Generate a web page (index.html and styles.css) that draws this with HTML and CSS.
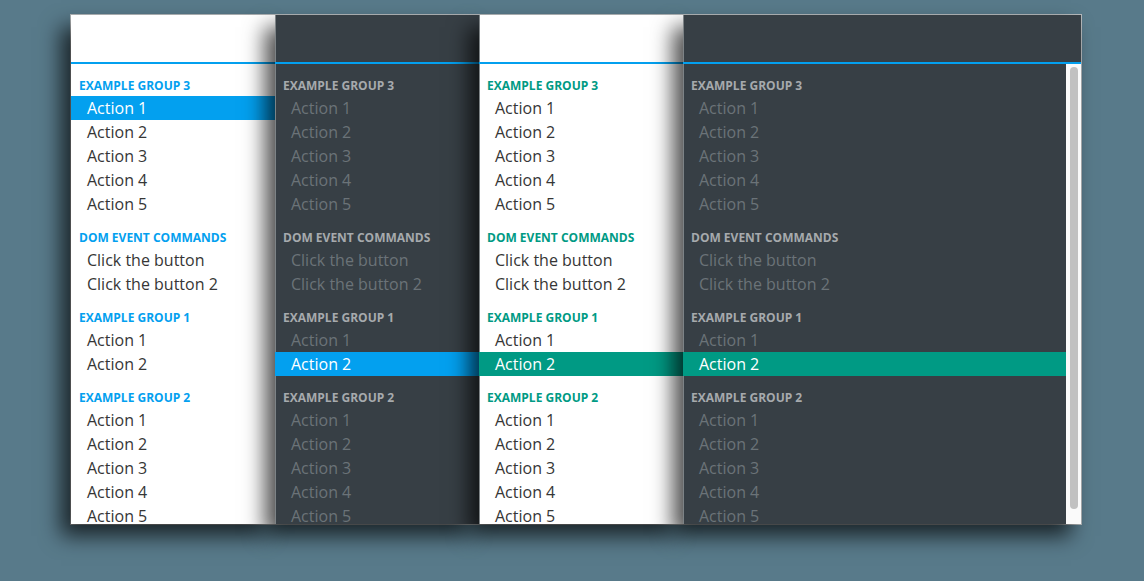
FILE: index.html
```html
<!DOCTYPE html>
<html>
<head>
<meta charset="utf-8">
<link rel="stylesheet" href="styles.css">
</head>
<body>
<div class="frame">
  <div class="panel light blue">
    <div class="head"></div>
    <div class="body">
      <ul class="list">
        <li class="group">Example Group 3</li>
        <li class="item sel">Action 1</li>
        <li class="item">Action 2</li>
        <li class="item">Action 3</li>
        <li class="item">Action 4</li>
        <li class="item">Action 5</li>
        <li class="group">DOM Event Commands</li>
        <li class="item">Click the button</li>
        <li class="item">Click the button 2</li>
        <li class="group">Example Group 1</li>
        <li class="item">Action 1</li>
        <li class="item">Action 2</li>
        <li class="group">Example Group 2</li>
        <li class="item">Action 1</li>
        <li class="item">Action 2</li>
        <li class="item">Action 3</li>
        <li class="item">Action 4</li>
        <li class="item">Action 5</li>
      </ul>
    </div>
  </div>
  <div class="panel dark blue">
    <div class="head"></div>
    <div class="body">
      <ul class="list">
        <li class="group">Example Group 3</li>
        <li class="item">Action 1</li>
        <li class="item">Action 2</li>
        <li class="item">Action 3</li>
        <li class="item">Action 4</li>
        <li class="item">Action 5</li>
        <li class="group">DOM Event Commands</li>
        <li class="item">Click the button</li>
        <li class="item">Click the button 2</li>
        <li class="group">Example Group 1</li>
        <li class="item">Action 1</li>
        <li class="item sel">Action 2</li>
        <li class="group">Example Group 2</li>
        <li class="item">Action 1</li>
        <li class="item">Action 2</li>
        <li class="item">Action 3</li>
        <li class="item">Action 4</li>
        <li class="item">Action 5</li>
      </ul>
    </div>
  </div>
  <div class="panel light teal">
    <div class="head"></div>
    <div class="body">
      <ul class="list">
        <li class="group">Example Group 3</li>
        <li class="item">Action 1</li>
        <li class="item">Action 2</li>
        <li class="item">Action 3</li>
        <li class="item">Action 4</li>
        <li class="item">Action 5</li>
        <li class="group">DOM Event Commands</li>
        <li class="item">Click the button</li>
        <li class="item">Click the button 2</li>
        <li class="group">Example Group 1</li>
        <li class="item">Action 1</li>
        <li class="item sel">Action 2</li>
        <li class="group">Example Group 2</li>
        <li class="item">Action 1</li>
        <li class="item">Action 2</li>
        <li class="item">Action 3</li>
        <li class="item">Action 4</li>
        <li class="item">Action 5</li>
      </ul>
    </div>
  </div>
  <div class="panel dark teal wide">
    <div class="head"></div>
    <div class="body">
      <ul class="list">
        <li class="group">Example Group 3</li>
        <li class="item">Action 1</li>
        <li class="item">Action 2</li>
        <li class="item">Action 3</li>
        <li class="item">Action 4</li>
        <li class="item">Action 5</li>
        <li class="group">DOM Event Commands</li>
        <li class="item">Click the button</li>
        <li class="item">Click the button 2</li>
        <li class="group">Example Group 1</li>
        <li class="item">Action 1</li>
        <li class="item sel">Action 2</li>
        <li class="group">Example Group 2</li>
        <li class="item">Action 1</li>
        <li class="item">Action 2</li>
        <li class="item">Action 3</li>
        <li class="item">Action 4</li>
        <li class="item">Action 5</li>
      </ul>
      <div class="scrollbar"><div class="thumb"></div></div>
    </div>
  </div>
</div>
</body>
</html>
```
FILE: styles.css
```css
html, body {
  margin: 0;
  padding: 0;
}
body {
  background: #587a8a;
  width: 1144px;
  height: 581px;
  overflow: hidden;
  font-family: "Open Sans", "Liberation Sans", sans-serif;
}
.frame {
  margin: 14px 0 0 70px;
  width: 1010px;
  height: 509px;
  border: 1px solid #b5b9bb;
  display: flex;
}
.panel {
  width: 204px;
  height: 509px;
  display: flex;
  flex-direction: column;
  overflow: hidden;
  box-shadow: -10px 12px 20px rgba(0, 0, 0, 0.7);
  box-sizing: border-box;
  flex: none;
}
.panel + .panel {
  box-shadow: -10px 12px 20px rgba(0, 0, 0, 0.7), inset 1px 0 0 #7d8386;
}
.panel.wide {
  width: 398px;
}
.head {
  height: 47px;
  border-bottom: 2px solid #03a0ef;
  flex: none;
}
.light { background: #ffffff; }
.dark { background: #373f45; }
.body {
  flex: 1;
  display: flex;
  min-height: 0;
}
.list {
  list-style: none;
  margin: 0;
  padding: 0;
  flex: 1;
}
.group {
  height: 32px;
  box-sizing: border-box;
  padding: 12px 0 0 8px;
  line-height: 20px;
  font-size: 12px;
  font-weight: 700;
  text-transform: uppercase;
  white-space: nowrap;
}
.item {
  height: 24px;
  line-height: 24px;
  padding-left: 16px;
  font-size: 16px;
  white-space: nowrap;
}
.light .item { color: #363636; }
.dark .item { color: #6b7378; }
.dark .group { color: #a6aaad; }
.light.blue .group { color: #03a0ef; }
.light.teal .group { color: #009a84; }
.blue .item.sel { background: #03a0ef; color: #ffffff; }
.teal .item.sel { background: #009a84; color: #ffffff; }
.scrollbar {
  width: 15px;
  background: #fafafa;
  padding: 3px 3px 15px 4px;
  box-sizing: border-box;
  flex: none;
}
.thumb {
  height: 100%;
  background: #c1c1c1;
  border-radius: 4px;
}
```
